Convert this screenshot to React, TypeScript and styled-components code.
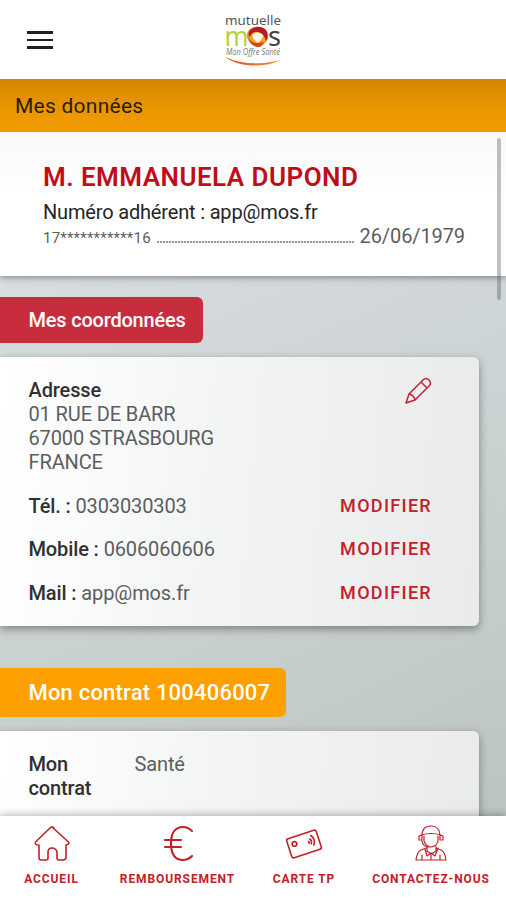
import React from 'react';
import styled, { createGlobalStyle } from 'styled-components';

const GlobalStyle = createGlobalStyle`
  * { box-sizing: border-box; }
  body { margin: 0; font-family: Roboto, "Liberation Sans", sans-serif; color: #5b5e5f; }
`;

const Screen = styled.div`
  width: 506px;
  height: 900px;
  display: flex;
  flex-direction: column;
  overflow: hidden;
  background: #fff;
`;

const Header = styled.header`
  height: 79px;
  flex: none;
  display: grid;
  grid-template-columns: 1fr auto 1fr;
  background: #fff;
`;

const MenuButton = styled.button`
  width: 26px;
  height: 18px;
  margin: 31px 0 0 27px;
  padding: 0;
  border: 0;
  background: none;
  display: flex;
  flex-direction: column;
  justify-content: space-between;
  align-items: stretch;
`;

const MenuBar = styled.span`
  height: 2.6px;
  background: #202124;
`;

const LogoSvg = styled.svg`
  display: block;
  margin-top: 10px;
`;

const TitleBar = styled.h1`
  height: 53px;
  flex: none;
  margin: 0;
  padding: 1px 15px 0;
  line-height: 52px;
  font-size: 21px;
  font-weight: 400;
  letter-spacing: 0.25px;
  color: #2b1c00;
  background: linear-gradient(#cf8500 0, #de8e00 25%, #eb9700 60%, #f29b00 100%);
`;

const Content = styled.main`
  flex: 1;
  min-height: 0;
  overflow: hidden;
  position: relative;
  background: linear-gradient(155deg, #dde2e4 0%, #d3d9db 30%, #c8cfcf 65%, #bbc4c3 100%);
`;

const ScrollThumb = styled.div`
  position: absolute;
  top: 6px;
  right: 5px;
  width: 4px;
  height: 162px;
  border-radius: 2px;
  background: rgba(95, 98, 100, 0.4);
`;

const Profile = styled.section`
  height: 144px;
  padding: 29px 41px 0 43px;
  background: linear-gradient(#f8f8f9, #fff 45%);
  box-shadow: 0 1px 7px rgba(0, 0, 0, 0.45);
`;

const ProfileName = styled.h2`
  margin: 0;
  line-height: 32px;
  font-size: 26px;
  font-weight: 600;
  letter-spacing: 0.46px;
  color: #c10d1a;
`;

const Member = styled.div`
  margin-top: 7px;
  line-height: 24px;
  font-size: 20px;
  letter-spacing: -0.17px;
  color: #242526;
`;

const IdentityRow = styled.div`
  display: flex;
  height: 24px;
  line-height: 24px;
  align-items: baseline;
`;

const MaskedId = styled.span`
  font-size: 15px;
  letter-spacing: 0.2px;
`;

const Leader = styled.span`
  flex: 1;
  height: 2px;
  margin: 0 6px;
  background: repeating-linear-gradient(90deg, #9b9d9e 0 2px, #e8e8e8 2px 3px);
`;

const BirthDate = styled.span`
  font-size: 20px;
  letter-spacing: -0.1px;
`;

const Tag = styled.h3<{ $tone: string; $width: number; $height: number; $top: number; $size: number; $spacing: number }>`
  width: ${({ $width }) => $width}px;
  height: ${({ $height }) => $height}px;
  line-height: ${({ $height }) => $height}px;
  margin: ${({ $top }) => $top}px 0 14px;
  padding-left: 28.5px;
  border-radius: 0 6px 6px 0;
  background: ${({ $tone }) => $tone};
  color: #fff;
  font-size: ${({ $size }) => $size}px;
  font-weight: 500;
  letter-spacing: ${({ $spacing }) => $spacing}px;
  white-space: nowrap;
`;

const Card = styled.section<{ $height: number }>`
  width: 479px;
  height: ${({ $height }) => $height}px;
  padding: 21px 47px 0 28.5px;
  border-radius: 0 6px 6px 0;
  font-size: 20px;
  letter-spacing: -0.12px;
  line-height: 24px;
  background: linear-gradient(95deg, #fff 0%, #f3f4f4 45%, #e9ebeb 100%);
  box-shadow: 0 3px 8px rgba(0, 0, 0, 0.38);
`;

const AddressRow = styled.div`
  display: flex;
  justify-content: space-between;
  align-items: flex-start;
`;

const Label = styled.strong`
  font-weight: 500;
  color: #303132;
`;

const ContactRow = styled.div`
  display: flex;
  justify-content: space-between;
  margin-top: 19.7px;
`;

const EditLink = styled.a`
  color: #c32028;
  font-size: 18px;
  font-weight: 500;
  letter-spacing: 1.3px;
`;

const ContractRow = styled.div`
  display: grid;
  grid-template-columns: 83px 1fr;
  column-gap: 23px;
  margin-bottom: 12px;
`;

const Nav = styled.nav`
  height: 84px;
  flex: none;
  display: grid;
  grid-template-columns: 103px 149px 104px 150px;
  background: #fff;
  position: relative;
  box-shadow: 0 -1px 8px rgba(0, 0, 0, 0.3);
`;

const NavItem = styled.a`
  display: flex;
  flex-direction: column;
  align-items: center;
  padding-top: 8px;
  color: #c32028;
  font-size: 12px;
  line-height: 16px;
  font-weight: 700;
  letter-spacing: 0.9px;
  white-space: nowrap;
`;

const NavIcon = styled.svg`
  width: 40px;
  height: 40px;
  margin-bottom: 7px;
  fill: none;
  stroke: #c32028;
  stroke-width: 1.6;
  stroke-linejoin: round;
  stroke-linecap: round;
`;

const PencilIcon = styled.svg`
  width: 28px;
  height: 28px;
  margin-top: -1px;
  fill: none;
  stroke: #c32035;
  stroke-width: 1.5;
  stroke-linejoin: round;
`;

const Logo = () => (
  <LogoSvg width="62" height="60" viewBox="0 0 62 60">
    <defs>
      <linearGradient id="swoosh" x1="0" x2="1">
        <stop offset="0" stopColor="#df4b20" />
        <stop offset="1" stopColor="#ec9530" />
      </linearGradient>
    </defs>
    <text x="3" y="15" fontFamily="Noto Sans" fontSize="13" textLength="56" lengthAdjust="spacingAndGlyphs" fill="#56565a">mutuelle</text>
    <text x="2.5" y="35.5" fontFamily="Noto Sans" fontSize="27" textLength="24" lengthAdjust="spacingAndGlyphs" fill="#b3d33c">m</text>
    <text x="46" y="36" fontFamily="Noto Sans" fontSize="27" textLength="13" lengthAdjust="spacingAndGlyphs" fill="#424247">s</text>
    <text x="4" y="45" fontFamily="Open Sans" fontSize="8.5" fontStyle="italic" textLength="54" lengthAdjust="spacingAndGlyphs" fill="#77777b">Mon Offre Santé</text>
    <path d="M26 21Q30 16 37 17Q45 18 46 24Q47 31 41 35Q36 39 30 34Q22 28 26 21Z" fill="#f1a51e" />
    <path d="M28 20Q36 14 43 19Q48 24 44 31Q42 23 36 22Q30 21 28 27Q25 24 28 20Z" fill="#b7192b" />
    <path d="M26 26Q29 36 42 32Q40 37 36 37Q27 36 26 26Z" fill="#d8431e" />
    <path d="M30 25Q36 20 41 25Q41 29 36 33Q31 30 30 25Z" fill="#fff9e8" />
    <path d="M3 47Q27 58 59 50Q47 56 29 55.5Q12 54 3 47Z" fill="url(#swoosh)" />
  </LogoSvg>
);

const Pencil = () => (
  <PencilIcon viewBox="0 0 28 28">
    <path d="M2 26L5 17L19 3Q22 0 25 3Q28 6 25 9L11 23ZM5 17Q10 18 11 23M17 5L23 11" />
  </PencilIcon>
);

const contacts = [
  ['Tél. :', '0303030303'],
  ['Mobile :', '0606060606'],
  ['Mail :', 'app@mos.fr'],
];

export default function App() {
  return (
    <>
      <GlobalStyle />
      <Screen>
        <Header>
          <MenuButton aria-label="Menu"><MenuBar /><MenuBar /><MenuBar /></MenuButton>
          <Logo />
        </Header>
        <TitleBar>Mes données</TitleBar>
        <Content>
          <Profile>
            <ProfileName>M. EMMANUELA DUPOND</ProfileName>
            <Member>Numéro adhérent : app@mos.fr</Member>
            <IdentityRow>
              <MaskedId>17***********16</MaskedId>
              <Leader />
              <BirthDate>26/06/1979</BirthDate>
            </IdentityRow>
          </Profile>
          <Tag $tone="#c72d3c" $width={203} $height={46} $top={21} $size={20} $spacing={-0.2}>Mes coordonnées</Tag>
          <Card $height={269}>
            <AddressRow>
              <div>
                <Label>Adresse</Label><br />
                01 RUE DE BARR<br />
                67000 STRASBOURG<br />
                FRANCE
              </div>
              <Pencil />
            </AddressRow>
            {contacts.map(([label, value]) => (
              <ContactRow key={label}>
                <span><Label>{label}</Label> {value}</span>
                <EditLink>MODIFIER</EditLink>
              </ContactRow>
            ))}
          </Card>
          <Tag $tone="#fda000" $width={286} $height={49} $top={42} $size={22} $spacing={0.2}>Mon contrat 100406007</Tag>
          <Card $height={200}>
            <ContractRow><Label>Mon contrat</Label><span>Santé</span></ContractRow>
            <ContractRow><Label>Qualité</Label><span>Assuré</span></ContractRow>
          </Card>
          <ScrollThumb />
        </Content>
        <Nav>
          <NavItem>
            <NavIcon viewBox="0 0 40 40">
              <path d="M20 3L36.5 18Q38 20 34 21V33Q34 36 31 36H27Q25 36 25 34V28Q24 24 20 24Q16 24 16 28V34Q16 36 14 36H9Q7 36 7 33V21Q2 21 3.5 18L18 4Q20 2 22 4" />
            </NavIcon>
            ACCUEIL
          </NavItem>
          <NavItem>
            <NavIcon viewBox="0 0 40 40">
              <path strokeWidth="2.1" d="M34 7Q30 3 25 3C17 3 13 9 13 19C13 30 17 36 25 36Q30 36 34 32M7 16H23M7 23H23" />
            </NavIcon>
            REMBOURSEMENT
          </NavItem>
          <NavItem>
            <NavIcon viewBox="0 0 40 40">
              <g transform="rotate(-18 20 20)">
                <rect x="4.5" y="10" width="31" height="20" rx="2" />
                <circle cx="11" cy="17" r="2.3" />
                <path d="M27 17Q29 19 27 22M29 14Q33 19 29 24M25 19Q26 20 25 21" />
              </g>
            </NavIcon>
            CARTE TP
          </NavItem>
          <NavItem>
            <NavIcon viewBox="0 0 40 40">
              <path strokeWidth="1.2" d="M11 12Q11 2 20 2Q29 2 29 12M10 11Q20 8 30 11M11 11V16H8V12L11 11M29 11V16H32V12L29 11M13 12V17Q15 23 20 23Q26 22 27 17V12M11 17Q12 23 18 23M16 22V27L20 30L25 27V22M15 24L10 26Q6 28 5 36H35Q34 28 30 26L25 24M14 25L16 32L20 29L24 32L27 24M11 31V36M29 31V36M20 30V35" />
            </NavIcon>
            CONTACTEZ-NOUS
          </NavItem>
        </Nav>
      </Screen>
    </>
  );
}
